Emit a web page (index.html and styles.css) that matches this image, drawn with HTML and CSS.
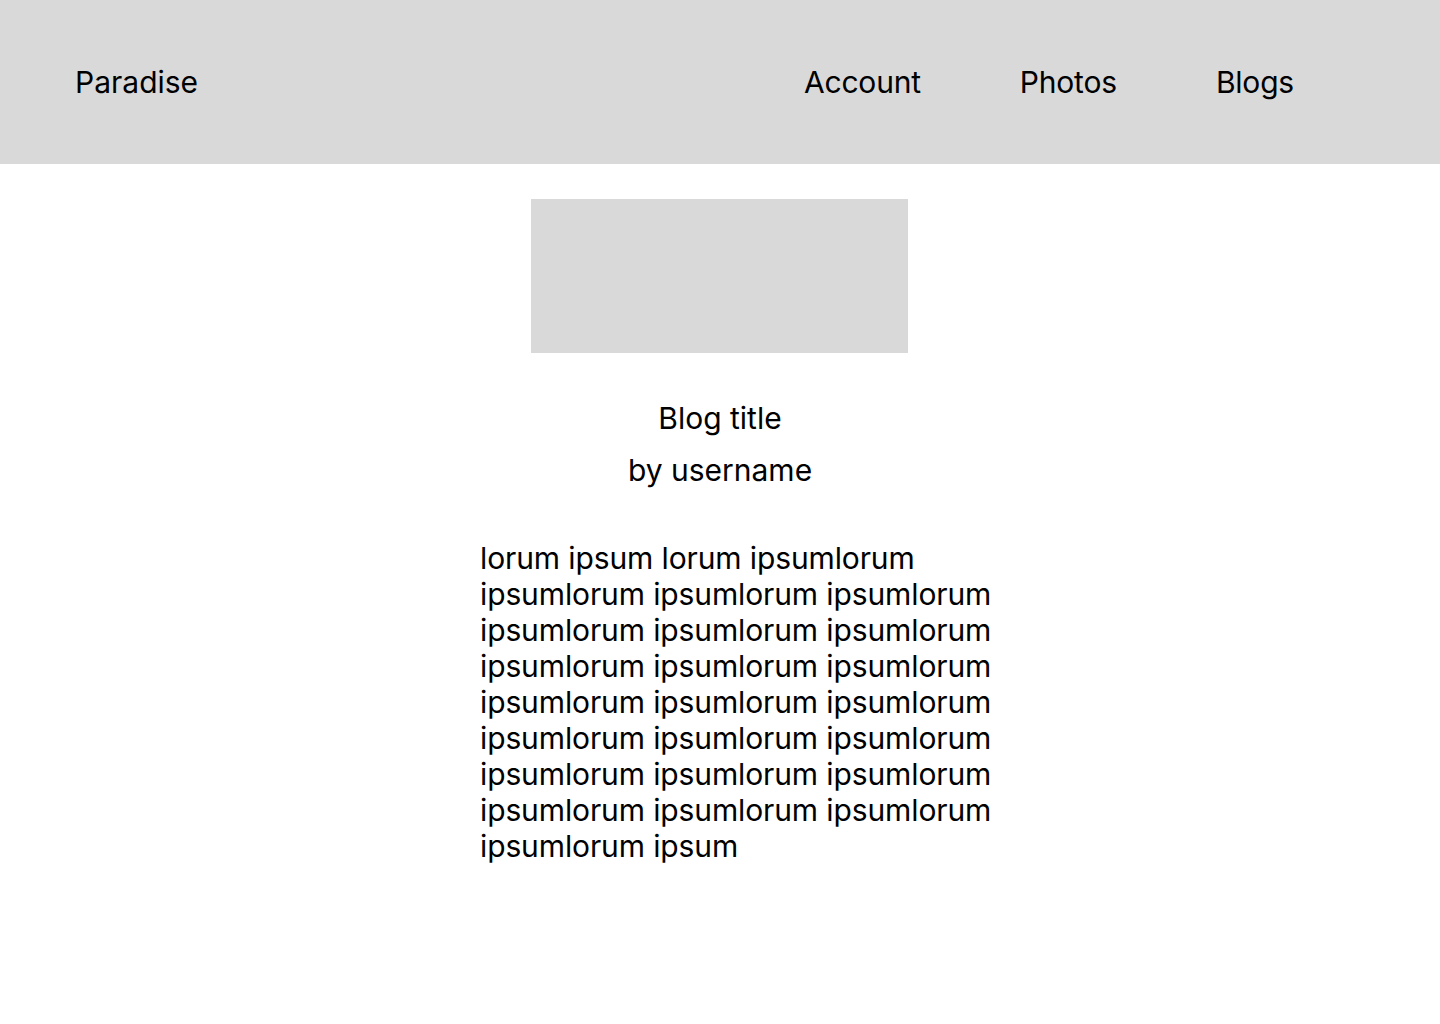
FILE: index.html
```html
<!DOCTYPE html>
<html lang="en">
<head>
<meta charset="utf-8">
<title>Paradise</title>
<link rel="stylesheet" href="styles.css">
</head>
<body>
<header class="topbar">
  <div class="brand">Paradise</div>
  <nav class="nav">
    <a class="nav-link" href="#">Account</a>
    <a class="nav-link" href="#">Photos</a>
    <a class="nav-link" href="#">Blogs</a>
  </nav>
</header>
<main class="post">
  <div class="cover"></div>
  <h1 class="title">Blog title</h1>
  <p class="author">by username</p>
  <p class="body-text">lorum ipsum lorum ipsumlorum ipsumlorum ipsumlorum ipsumlorum ipsumlorum ipsumlorum ipsumlorum ipsumlorum ipsumlorum ipsumlorum ipsumlorum ipsumlorum ipsumlorum ipsumlorum ipsumlorum ipsumlorum ipsumlorum ipsumlorum ipsumlorum ipsumlorum ipsumlorum ipsumlorum ipsumlorum ipsum</p>
</main>
</body>
</html>
```
FILE: styles.css
```css
* { box-sizing: border-box; }
html, body { margin: 0; padding: 0; background: #ffffff; }
body {
  font-family: "Inter", "Liberation Sans", sans-serif;
  font-size: 30px;
  line-height: 36px;
  color: #000000;
}
.topbar {
  height: 164px;
  background: #d9d9d9;
  display: flex;
  align-items: center;
  justify-content: space-between;
  padding: 0 146px 0 75px;
}
.brand { font-weight: 400; }
.nav { display: flex; gap: 99px; }
.nav-link { color: #000000; text-decoration: none; letter-spacing: -0.2px; }
.post {
  display: flex;
  flex-direction: column;
  align-items: center;
  padding-top: 35px;
}
.cover {
  width: 377px;
  height: 154px;
  margin-right: 2px;
  background: #d9d9d9;
}
.title {
  margin: 47px 0 0;
  font-size: 30px;
  font-weight: 400;
  line-height: 36px;
}
.author {
  margin: 16px 0 0;
}
.body-text {
  margin: 52px 0 0 40px;
  width: 520px;
  letter-spacing: -0.12px;
}
```
